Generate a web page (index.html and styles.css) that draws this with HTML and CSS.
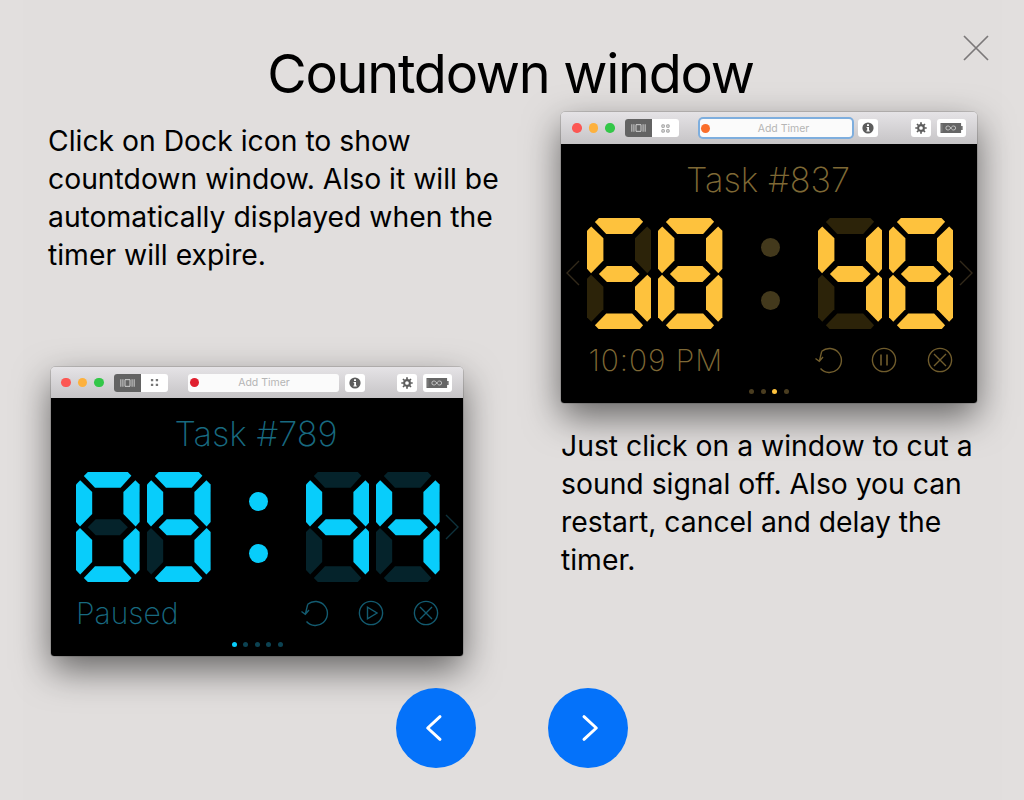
FILE: index.html
```html
<!DOCTYPE html>
<html lang="en">
<head>
    <meta charset="UTF-8">
    <title>Countdown window</title>
    <link rel="stylesheet" href="styles.css">
</head>
<body>
    <svg class="defs" aria-hidden="true">
        <defs>
            <polygon id="seg-t" points="11.8,0 51.8,0 55.4,3.8 44.6,15.7 19,15.7 7.8,4"/>
            <polygon id="seg-ul" points="4.2,8.3 16.2,20 16.2,42 4,54.5 0,50 0,12.5"/>
            <polygon id="seg-ur" points="59.4,8.3 47.4,20 47.4,42 59.6,54.5 63.6,50 63.6,12.5"/>
            <polygon id="seg-m" points="11.7,55.3 19.7,47.3 43.9,47.3 51.9,55.3 43.9,63.3 19.7,63.3"/>
            <polygon id="seg-ll" points="4,56 16.2,68 16.2,90 4.2,102.5 0,98 0,60"/>
            <polygon id="seg-lr" points="59.6,56 47.4,68 47.4,90 59.4,102.5 63.6,98 63.6,60"/>
            <polygon id="seg-b" points="7.8,106 19,94.3 44.6,94.3 55.4,106 51.8,110 11.8,110"/>
        </defs>
        <symbol id="ico-filmstrip" viewBox="0 0 18 12"><path d="M1 1.5v9M3.5 1.5v9M6 2h6v8H6zM14.5 1.5v9M17 1.5v9" fill="none" stroke="currentColor" stroke-width="1"/></symbol>
        <symbol id="ico-grid" viewBox="0 0 10 10"><path d="M1 1h2.6v2.6H1zM6.4 1H9v2.6H6.4zM1 6.4h2.6V9H1zM6.4 6.4H9V9H6.4z"/></symbol>
        <symbol id="ico-info" viewBox="0 0 12 12"><circle cx="6" cy="6" r="5.6" fill="currentColor"/><path d="M5 2.2h2v1.8H5zM4.6 5h2.4v3.4h.8v1H4.4v-1h.8V6h-.6z" fill="#fff"/></symbol>
        <symbol id="ico-gear" viewBox="0 0 12 12"><circle cx="6" cy="6" r="2.9" fill="none" stroke="currentColor" stroke-width="2.1"/><path d="M6 .3v2.2M6 9.5v2.2M.3 6h2.2M9.5 6h2.2M2 2l1.5 1.5M8.5 8.5 10 10M10 2 8.5 3.5M3.5 8.5 2 10" stroke="currentColor" stroke-width="1.7"/></symbol>
        <symbol id="ico-battery" viewBox="0 0 24 12"><path d="M.5.8h21.5v10.4H.5z" fill="#666"/><path d="M22 3.8h1.6v4.4H22z" fill="#666"/><path d="M2 2v8" stroke="#999" stroke-width=".6"/><path d="M11.2 6c-1-1.6-2-2.1-3-2.1a2.1 2.1 0 0 0 0 4.2c1 0 2-.5 3-2.1s2-2.1 3-2.1a2.1 2.1 0 0 1 0 4.2c-1 0-2-.5-3-2.1z" fill="none" stroke="#ddd" stroke-width=".8"/></symbol>
        <symbol id="ico-reload" viewBox="0 0 28 28"><path d="M6.7 5.3A12 12 0 1 1 5.5 22.5M6.7 5.3 4.3 15.3M.5 12.5 4.3 15.3 8 11" fill="none" stroke="currentColor" stroke-width="1.4"/></symbol>
        <symbol id="ico-play" viewBox="0 0 28 28"><circle cx="14" cy="14" r="11.6" fill="none" stroke="currentColor" stroke-width="1.4"/><path d="M10.5 8.2v11.6L20 14z" fill="none" stroke="currentColor" stroke-width="1.4"/></symbol>
        <symbol id="ico-pause" viewBox="0 0 28 28"><circle cx="14" cy="14" r="11.6" fill="none" stroke="currentColor" stroke-width="1.4"/><path d="M11 8.5v11M17 8.5v11" fill="none" stroke="currentColor" stroke-width="1.6"/></symbol>
        <symbol id="ico-cancel" viewBox="0 0 28 28"><circle cx="14" cy="14" r="11.6" fill="none" stroke="currentColor" stroke-width="1.4"/><path d="M8 8l12 12M20 8 8 20" fill="none" stroke="currentColor" stroke-width="1.4"/></symbol>
    </svg>

    <div class="page">
        <button class="close" aria-label="Close">
            <svg viewBox="0 0 26 26" width="26" height="26"><path d="M1 1l24 24M25 1 1 25" fill="none" stroke="#7b7879" stroke-width="1.7"/></svg>
        </button>
        <h1>Countdown window</h1>

        <div class="columns">
            <div class="col col-left">
                <p class="text">Click on Dock icon to show<br>countdown window. Also it will be<br>automatically displayed when the<br>timer will expire.</p>

                <div class="win win-blue">
                    <div class="bar">
                        <span class="light red"></span><span class="light yellow"></span><span class="light green"></span>
                        <div class="seg-ctl">
                            <span class="seg-on"><svg width="15" height="10"><use href="#ico-filmstrip"/></svg></span>
                            <span class="seg-off"><svg width="9" height="9"><use href="#ico-grid"/></svg></span>
                        </div>
                        <div class="search"><span class="dot"></span><span class="placeholder">Add Timer</span></div>
                        <span class="tool"><svg width="12" height="12"><use href="#ico-info"/></svg></span>
                        <span class="tool gear"><svg width="12" height="12"><use href="#ico-gear"/></svg></span>
                        <span class="tool wide"><svg width="23" height="12"><use href="#ico-battery"/></svg></span>
                    </div>
                    <div class="screen">
                        <svg class="chevron chevron-right" viewBox="0 0 14 26"><path d="M1 1l12 12L1 25"/></svg>
                        <div class="task">Task #789</div>
                        <div class="clock">
                            <svg class="digit" viewBox="0 0 63.6 110"><use href="#seg-t" class="on"/><use href="#seg-ul" class="on"/><use href="#seg-ur" class="on"/><use href="#seg-m"/><use href="#seg-ll" class="on"/><use href="#seg-lr" class="on"/><use href="#seg-b" class="on"/></svg>
                            <svg class="digit" viewBox="0 0 63.6 110"><use href="#seg-t" class="on"/><use href="#seg-ul" class="on"/><use href="#seg-ur" class="on"/><use href="#seg-m" class="on"/><use href="#seg-ll"/><use href="#seg-lr" class="on"/><use href="#seg-b" class="on"/></svg>
                            <div class="colon"><span></span><span></span></div>
                            <svg class="digit" viewBox="0 0 63.6 110"><use href="#seg-t"/><use href="#seg-ul" class="on"/><use href="#seg-ur" class="on"/><use href="#seg-m" class="on"/><use href="#seg-ll"/><use href="#seg-lr" class="on"/><use href="#seg-b"/></svg>
                            <svg class="digit" viewBox="0 0 63.6 110"><use href="#seg-t"/><use href="#seg-ul" class="on"/><use href="#seg-ur" class="on"/><use href="#seg-m" class="on"/><use href="#seg-ll"/><use href="#seg-lr" class="on"/><use href="#seg-b"/></svg>
                        </div>
                        <div class="foot">
                            <span class="status">Paused</span>
                            <div class="actions">
                                <svg width="28" height="28"><use href="#ico-reload"/></svg>
                                <svg width="28" height="28"><use href="#ico-play"/></svg>
                                <svg width="28" height="28"><use href="#ico-cancel"/></svg>
                            </div>
                        </div>
                        <div class="dots"><span class="active"></span><span></span><span></span><span></span><span></span></div>
                    </div>
                </div>
            </div>

            <div class="col col-right">
                <div class="win win-gold">
                    <div class="bar">
                        <span class="light red"></span><span class="light yellow"></span><span class="light green"></span>
                        <div class="seg-ctl">
                            <span class="seg-on"><svg width="15" height="10"><use href="#ico-filmstrip"/></svg></span>
                            <span class="seg-off"><svg width="9" height="9"><use href="#ico-grid"/></svg></span>
                        </div>
                        <div class="search focused"><span class="dot"></span><span class="placeholder">Add Timer</span></div>
                        <span class="tool"><svg width="12" height="12"><use href="#ico-info"/></svg></span>
                        <span class="tool gear"><svg width="12" height="12"><use href="#ico-gear"/></svg></span>
                        <span class="tool wide"><svg width="23" height="12"><use href="#ico-battery"/></svg></span>
                    </div>
                    <div class="screen">
                        <svg class="chevron chevron-left" viewBox="0 0 14 26"><path d="M13 1 1 13l12 12"/></svg>
                        <svg class="chevron chevron-right" viewBox="0 0 14 26"><path d="M1 1l12 12L1 25"/></svg>
                        <div class="task">Task #837</div>
                        <div class="clock">
                            <svg class="digit" viewBox="0 0 63.6 110"><use href="#seg-t" class="on"/><use href="#seg-ul" class="on"/><use href="#seg-ur"/><use href="#seg-m" class="on"/><use href="#seg-ll"/><use href="#seg-lr" class="on"/><use href="#seg-b" class="on"/></svg>
                            <svg class="digit" viewBox="0 0 63.6 110"><use href="#seg-t" class="on"/><use href="#seg-ul" class="on"/><use href="#seg-ur" class="on"/><use href="#seg-m" class="on"/><use href="#seg-ll" class="on"/><use href="#seg-lr" class="on"/><use href="#seg-b" class="on"/></svg>
                            <div class="colon"><span></span><span></span></div>
                            <svg class="digit" viewBox="0 0 63.6 110"><use href="#seg-t"/><use href="#seg-ul" class="on"/><use href="#seg-ur" class="on"/><use href="#seg-m" class="on"/><use href="#seg-ll"/><use href="#seg-lr" class="on"/><use href="#seg-b"/></svg>
                            <svg class="digit" viewBox="0 0 63.6 110"><use href="#seg-t" class="on"/><use href="#seg-ul" class="on"/><use href="#seg-ur" class="on"/><use href="#seg-m" class="on"/><use href="#seg-ll" class="on"/><use href="#seg-lr" class="on"/><use href="#seg-b" class="on"/></svg>
                        </div>
                        <div class="foot">
                            <span class="status">10:09 PM</span>
                            <div class="actions">
                                <svg width="28" height="28"><use href="#ico-reload"/></svg>
                                <svg width="28" height="28"><use href="#ico-pause"/></svg>
                                <svg width="28" height="28"><use href="#ico-cancel"/></svg>
                            </div>
                        </div>
                        <div class="dots"><span></span><span></span><span class="active"></span><span></span></div>
                    </div>
                </div>
                <p class="text text-below">Just click on a window to cut a<br>sound signal off. Also you can<br>restart, cancel and delay the<br>timer.</p>
            </div>
        </div>

        <div class="nav">
            <button class="round" aria-label="Previous"><svg viewBox="0 0 80 80" width="80" height="80"><path d="M44 28.7 31.7 40 44 51.3"/></svg></button>
            <button class="round" aria-label="Next"><svg viewBox="0 0 80 80" width="80" height="80"><path d="M36 28.7 48.3 40 36 51.3"/></svg></button>
        </div>
    </div>
</body>
</html>
```
FILE: styles.css
```css
body {
    margin: 0;
    background-color: #e1dedd;
    font-family: Inter, "Liberation Sans", sans-serif;
    color: #000;
}
.defs {
    display: none;
}
.page {
    position: relative;
    width: 1024px;
    height: 800px;
    overflow: hidden;
    background: linear-gradient(90deg, #e2dfde 23px, #e1dedd 23px, #e1dedd 1002px, #e2dfde 1002px);
}
.close {
    position: absolute;
    top: 35px;
    right: 35px;
    padding: 0;
    border: none;
    background: none;
    line-height: 0;
}
h1 {
    margin: 0;
    height: 112px;
    padding: 41px 3px 0 0;
    box-sizing: border-box;
    font-size: 54px;
    line-height: 66px;
    font-weight: 400;
    letter-spacing: -1.25px;
    text-align: center;
}
.columns {
    display: flex;
    padding-left: 48px;
    height: 576px;
}
.col-left {
    width: 513px;
}
.col-right {
    width: 420px;
}
.text {
    margin: 0;
    font-size: 28.3px;
    line-height: 38px;
    white-space: nowrap;
}
.col-left .text {
    padding-top: 10px;
}
.text-below {
    margin-top: 24px;
}

/* app window */
.win {
    box-shadow: 0 0 0 0.5px rgba(0, 0, 0, 0.25), 0 14px 36px rgba(0, 0, 0, 0.55);
    border-radius: 4px 4px 3px 3px;
    overflow: hidden;
}
.win-blue {
    width: 412px;
    margin: 93px 0 0 3px;
    --lit: #08cdfb;
    --dim: #05232b;
    --soft: #186a80;
    --line: #135b70;
    --chev: #0e323c;
    --dot: #0c4252;
}
.win-gold {
    width: 416px;
    --lit: #fec23d;
    --dim: #2c2309;
    --soft: #7f6935;
    --line: #705c2c;
    --chev: #32291a;
    --dot: #4a3d20;
}
.bar {
    display: flex;
    align-items: center;
    height: 31px;
    padding: 0 11px 0 10px;
    background: linear-gradient(#e5e3e6, #c6c4c6);
}
.win-gold .bar {
    height: 32px;
    padding-left: 11px;
}
.light {
    width: 9.5px;
    height: 9.5px;
    border-radius: 50%;
    margin-right: 7px;
}
.red { background-color: #fc5753; }
.yellow { background-color: #fdb13d; }
.green { background-color: #33c748; }
.seg-ctl {
    display: flex;
    height: 18px;
    margin-left: 3px;
    border-radius: 3px;
    overflow: hidden;
    background-color: #fff;
}
.seg-on, .seg-off {
    display: flex;
    align-items: center;
    justify-content: center;
    width: 27px;
}
.seg-on {
    background-color: #636363;
    color: #e4e4e4;
}
.seg-off {
    color: #777;
}
.seg-off svg {
    fill: none;
    stroke: currentColor;
    stroke-width: 0.8;
}
.win-blue .seg-off svg {
    fill: currentColor;
    stroke: none;
}
.search {
    display: flex;
    align-items: center;
    width: 151px;
    height: 18px;
    margin-left: 20px;
    border-radius: 3px;
    background-color: #fbfbfb;
}
.win-gold .search {
    margin-left: 21px;
    width: 152px;
}
.search.focused {
    box-shadow: 0 0 0 2px #7eaede;
}
.search .dot {
    width: 9px;
    height: 9px;
    margin-left: 2px;
    border-radius: 50%;
    background-color: #e0202f;
}
.win-gold .search .dot {
    background-color: #fb6e2a;
    margin-left: 1px;
}
.placeholder {
    flex: 1;
    padding-right: 9px;
    text-align: center;
    font-size: 10.5px;
    color: #b5b5b5;
}
.win-gold .placeholder {
    padding: 0 0 0 6px;
}
.tool {
    display: flex;
    align-items: center;
    justify-content: center;
    width: 20px;
    height: 18px;
    margin-left: 6px;
    border-radius: 3px;
    background-color: #fff;
    color: #5c5c5c;
}
.gear {
    margin-left: auto;
}
.wide {
    width: 29px;
}
.screen {
    position: relative;
    display: flex;
    flex-direction: column;
    align-items: center;
    height: 258px;
    background-color: #000;
}
.win-gold .screen {
    height: 259px;
}
.task {
    margin-top: 16px;
    padding-right: 2px;
    font-size: 34.4px;
    line-height: 40px;
    font-weight: 200;
    color: var(--soft);
}
.clock {
    display: flex;
    gap: 7px;
    margin-top: 18px;
    margin-left: 2px;
}
.digit {
    width: 63.6px;
    height: 110px;
    fill: var(--dim);
}
.win-gold .digit {
    width: 64.4px;
    height: 111.4px;
}
.digit .on {
    fill: var(--lit);
}
.colon {
    display: flex;
    flex-direction: column;
    align-items: center;
    justify-content: center;
    gap: 33.5px;
    width: 81px;
    padding-top: 1px;
}
.colon span {
    width: 19px;
    height: 19px;
    border-radius: 50%;
    background-color: var(--lit);
}
.win-gold .colon span {
    background-color: #43391c;
}
.foot {
    display: flex;
    align-items: center;
    justify-content: space-between;
    width: 364px;
    height: 40px;
    margin-top: 11px;
    margin-left: 2px;
    color: var(--line);
}
.win-gold .foot {
    width: 367px;
}
.status {
    font-size: 30px;
    font-weight: 200;
    color: var(--soft);
}
.win-gold .status {
    padding-left: 2px;
    letter-spacing: 0.9px;
}
.actions {
    display: flex;
    gap: 27.5px;
}
.dots {
    display: flex;
    gap: 6.5px;
    margin-top: 9px;
}
.dots span {
    width: 5px;
    height: 5px;
    border-radius: 50%;
    background-color: var(--dot);
}
.dots .active {
    background-color: var(--lit);
}
.chevron {
    position: absolute;
    top: 116px;
    width: 14px;
    height: 26px;
    fill: none;
    stroke: var(--chev);
    stroke-width: 1.4;
}
.chevron-left {
    left: 5px;
}
.chevron-right {
    right: 4px;
}

/* bottom arrows */
.nav {
    display: flex;
    justify-content: center;
    gap: 72px;
}
.round {
    width: 80px;
    height: 80px;
    padding: 0;
    border: none;
    border-radius: 50%;
    background-color: #0472fa;
    line-height: 0;
}
.round path {
    fill: none;
    stroke: #fff;
    stroke-width: 3;
    stroke-linecap: round;
    stroke-linejoin: round;
}
```
